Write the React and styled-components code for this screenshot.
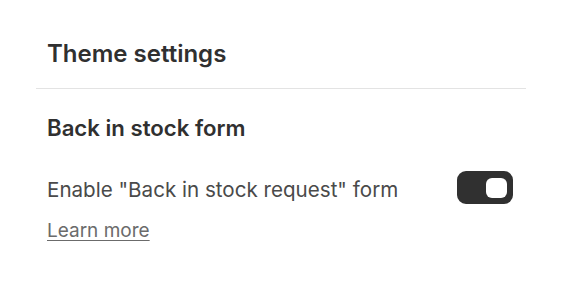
import React from "react";
import styled, { createGlobalStyle } from "styled-components";

const Global = createGlobalStyle`
  html, body { margin: 0; padding: 0; background: #fff; }
  body { font-family: Inter, "Noto Sans", sans-serif; -webkit-font-smoothing: antialiased; }
`;

const Panel = styled.div`
  width: 570px;
  height: 290px;
  box-sizing: border-box;
  padding: 0 44px 0 36px;
  display: flex;
  flex-direction: column;
`;

const Header = styled.div`
  padding: 40px 0 20px 11px;
  border-bottom: 1px solid #e3e3e3;
`;

const Title = styled.h1`
  margin: 0;
  font-size: 24px;
  line-height: 28px;
  font-weight: 600;
  color: #303030;
`;

const Section = styled.div`
  padding: 25px 13px 0 11px;
  display: flex;
  flex-direction: column;
`;

const SectionTitle = styled.h2`
  margin: 0;
  font-size: 22.2px;
  line-height: 28px;
  font-weight: 600;
  color: #303030;
`;

const Row = styled.div`
  margin-top: 29px;
  display: flex;
  align-items: center;
  justify-content: space-between;
`;

const Label = styled.span`
  padding-top: 4px;
  font-size: 20.6px;
  line-height: 28px;
  color: #4a4a4a;
`;

const Toggle = styled.button`
  width: 56px;
  height: 33px;
  border: none;
  border-radius: 9px;
  background: #303030;
  padding: 0 6px 0 0;
  display: flex;
  align-items: center;
  justify-content: flex-end;
  cursor: pointer;
`;

const Knob = styled.span`
  width: 21px;
  height: 20px;
  border-radius: 6px;
  background: #fff;
`;

const Link = styled.a`
  margin-top: 15px;
  font-size: 19px;
  line-height: 24px;
  color: #6b6b6b;
  text-decoration: underline;
  text-underline-offset: 3px;
  align-self: flex-start;
`;

export default function App() {
  return (
    <>
      <Global />
      <Panel>
        <Header>
          <Title>Theme settings</Title>
        </Header>
        <Section>
          <SectionTitle>Back in stock form</SectionTitle>
          <Row>
            <Label>Enable "Back in stock request" form</Label>
            <Toggle aria-label="toggle">
              <Knob />
            </Toggle>
          </Row>
          <Link href="#">Learn more</Link>
        </Section>
      </Panel>
    </>
  );
}
